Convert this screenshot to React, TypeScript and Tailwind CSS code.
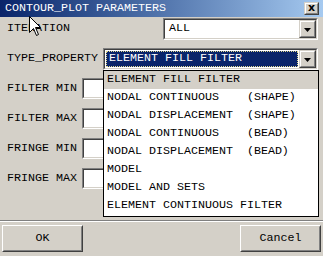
import React from "react";

const Sunken = ({ className = "", children }: { className?: string; children?: React.ReactNode }) => (
  <div className={`border border-t-[#808080] border-l-[#808080] border-b-white border-r-white ${className}`}>
    <div className="w-full h-full border border-t-[#404040] border-l-[#404040] border-b-[#d4d0c8] border-r-[#d4d0c8] bg-white flex items-center">
      {children}
    </div>
  </div>
);

const Raised = ({ className = "", children }: { className?: string; children?: React.ReactNode }) => (
  <div className={`border border-t-[#d4d0c8] border-l-[#d4d0c8] border-b-[#404040] border-r-[#404040] bg-[#d4d0c8] ${className}`}>
    <div className="w-full h-full border border-t-white border-l-white border-b-[#808080] border-r-[#808080] flex items-center justify-center">
      {children}
    </div>
  </div>
);

const Arrow = () => (
  <Raised className="w-[17px] h-[18px] shrink-0">
    <svg width="7" height="4" viewBox="0 0 7 4" className="mt-[1px]">
      <path d="M0 0 H7 L3.5 4 Z" fill="#000" />
    </svg>
  </Raised>
);

const items = [
  "ELEMENT FILL FILTER",
  "NODAL CONTINUOUS    (SHAPE)",
  "NODAL DISPLACEMENT  (SHAPE)",
  "NODAL CONTINUOUS    (BEAD)",
  "NODAL DISPLACEMENT  (BEAD)",
  "MODEL",
  "MODEL AND SETS",
  "ELEMENT CONTINUOUS FILTER",
];

const fieldRows = ["FILTER MIN", "FILTER MAX", "FRINGE MIN", "FRINGE MAX"];

export default function App() {
  return (
    <div
      className="relative w-[323px] h-[256px] overflow-hidden bg-[#d4d0c8] text-black text-[11.67px] leading-none whitespace-pre"
      style={{ fontFamily: '"Liberation Mono", "Courier New", monospace' }}
    >
      {/* title bar */}
      <div className="h-[17px] flex items-center bg-gradient-to-r from-[#0a246a] to-[#a6caf0] pl-[5px] pr-[4px]">
        <span className="text-white">CONTOUR_PLOT PARAMETERS</span>
        <Raised className="ml-auto w-[15px] h-[13px]">
          <span className="text-[11px] font-bold leading-none -mt-[2px]" style={{ fontFamily: '"DejaVu Sans", sans-serif' }}>x</span>
        </Raised>
      </div>

      {/* iteration row */}
      <div className="mt-[1px] h-[22px] flex items-center pl-[7px] pr-[5px]">
        <span>ITERATION</span>
        <Sunken className="ml-auto w-[155px] h-[22px]">
          <span className="pl-[4px] flex-1">ALL</span>
          <Arrow />
        </Sunken>
      </div>

      {/* type property row */}
      <div className="mt-[8px] h-[22px] flex items-center pl-[7px] pr-[5px]">
        <span>TYPE_PROPERTY</span>
        <Sunken className="ml-auto w-[215px] h-[22px]">
          <div className="flex-1 h-full p-[1px]">
            <div className="h-full bg-[#0a246a] border border-dotted border-[#e0d890] flex items-center pl-[2px] text-white">
              ELEMENT FILL FILTER
            </div>
          </div>
          <Arrow />
        </Sunken>
      </div>

      {/* field rows */}
      <div className="mt-[8px] flex flex-col gap-[9px]">
        {fieldRows.map((r) => (
          <div key={r} className="h-[21px] flex items-center pl-[7px]">
            <span className="w-[75px]">{r}</span>
            <Sunken className="w-[60px] h-[21px]" />
          </div>
        ))}
      </div>

      {/* separator */}
      <div className="mt-[31px] h-[2px] border-t border-t-[#808080] border-b border-b-white" />

      {/* buttons */}
      <div className="mt-[3px] flex justify-between pl-[2px] pr-[2px]">
        <div className="w-[81px] h-[27px] border border-t-white border-l-white border-b-[#404040] border-r-[#404040]">
          <div className="w-full h-full border border-t-[#d4d0c8] border-l-[#d4d0c8] border-b-[#808080] border-r-[#808080] flex items-center justify-center">
            OK
          </div>
        </div>
        <div className="w-[81px] h-[27px] border border-t-white border-l-white border-b-[#404040] border-r-[#404040]">
          <div className="w-full h-full border border-t-[#d4d0c8] border-l-[#d4d0c8] border-b-[#808080] border-r-[#808080] flex items-center justify-center">
            Cancel
          </div>
        </div>
      </div>

      {/* dropdown list */}
      <div className="absolute left-[103px] top-[70px] w-[216px] h-[147px] border border-black bg-white flex flex-col">
        {items.map((t, i) => (
          <div
            key={t}
            className={`h-[18px] flex items-center pl-[3px] ${i === 0 ? "bg-[#d4d0c8]" : ""}`}
          >
            {t}
          </div>
        ))}
      </div>

      {/* mouse cursor */}
      <svg className="absolute left-[29px] top-[16px]" width="13" height="21" viewBox="0 0 13 21">
        <path
          d="M0.5 0.5 V16.5 L4.5 12.5 L7.5 19.5 L9.5 18.5 L6.5 11.5 H11.5 Z"
          fill="#fff"
          stroke="#000"
          strokeWidth="1"
          strokeLinejoin="miter"
        />
      </svg>
    </div>
  );
}
